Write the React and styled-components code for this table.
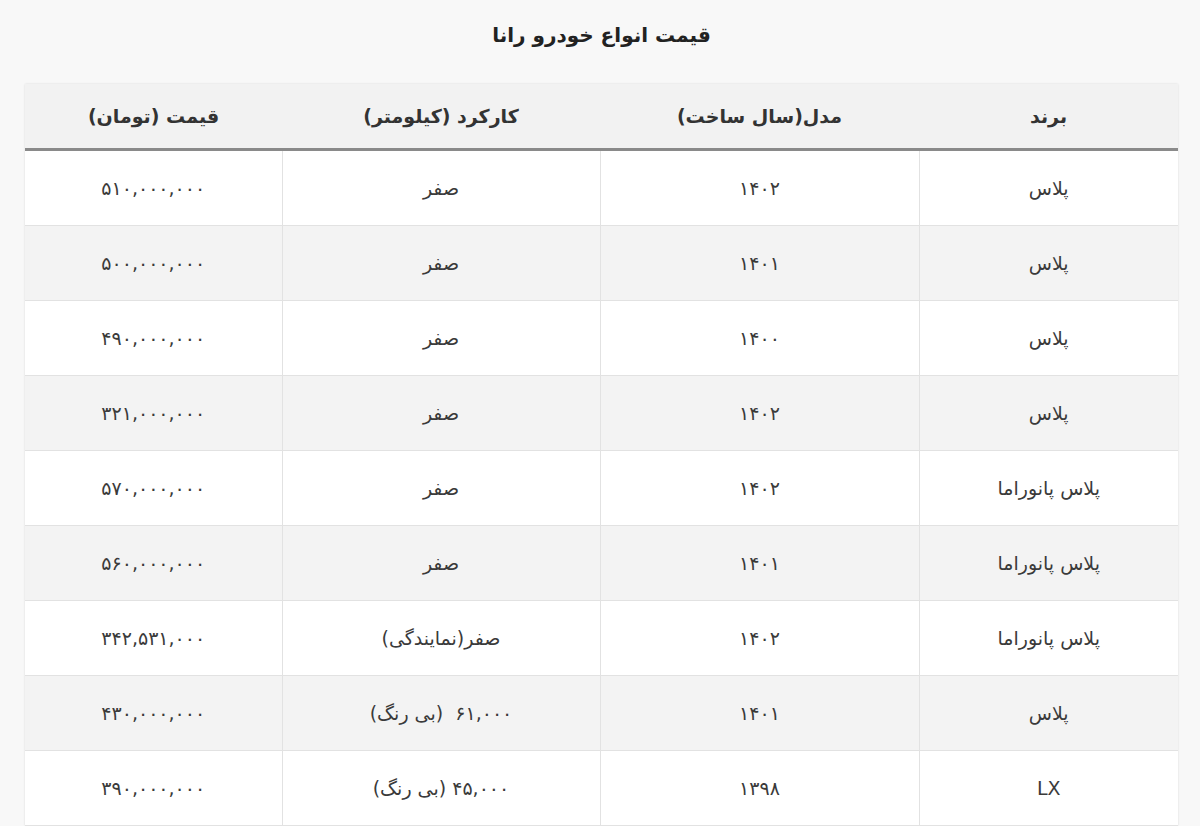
import React from 'react';
import styled, { createGlobalStyle } from 'styled-components';

const GlobalStyle = createGlobalStyle`
  html, body {
    margin: 0;
    padding: 0;
    background: #f8f8f8;
  }
  body {
    font-family: "DejaVu Sans", "Noto Sans", sans-serif;
    color: #333;
  }
`;

const Page = styled.div`
  direction: rtl;
  padding: 18px 22px 0 25px;
  height: 826px;
  box-sizing: border-box;
  overflow: hidden;
`;

const Title = styled.h2`
  margin: 0 0 32px 0;
  text-align: center;
  font-size: 20px;
  font-weight: bold;
  color: #222;
  line-height: 34px;
`;

const Table = styled.table`
  width: 100%;
  border-collapse: collapse;
  table-layout: fixed;
  background: #fff;
  box-shadow: 0 0 2px rgba(0, 0, 0, 0.12);
`;

const HeadCell = styled.th`
  height: 64px;
  background: #f2f2f2;
  border-bottom: 3px solid #8a8a8a;
  font-size: 19px;
  font-weight: bold;
  color: #333;
  text-align: center;
  padding: 0;
  width: ${(p) => p.$w}px;
`;

const Row = styled.tr`
  background: ${(p) => (p.$alt ? '#f3f3f3' : '#fff')};
`;

const Cell = styled.td`
  height: 74px;
  padding: 0;
  text-align: center;
  font-size: 19px;
  color: #3a3a3a;
  border-left: 1px solid #e2e2e2;
  border-bottom: 1px solid #e2e2e2;
  &:last-child {
    border-left: none;
  }
`;

const columns = [
  { title: 'برند', w: 259 },
  { title: 'مدل(سال ساخت)', w: 319 },
  { title: 'کارکرد (کیلومتر)', w: 318 },
  { title: 'قیمت (تومان)', w: 257 },
];

const rows = [
  ['پلاس', '۱۴۰۲', 'صفر', '۵۱۰,۰۰۰,۰۰۰'],
  ['پلاس', '۱۴۰۱', 'صفر', '۵۰۰,۰۰۰,۰۰۰'],
  ['پلاس', '۱۴۰۰', 'صفر', '۴۹۰,۰۰۰,۰۰۰'],
  ['پلاس', '۱۴۰۲', 'صفر', '۳۲۱,۰۰۰,۰۰۰'],
  ['پلاس پانوراما', '۱۴۰۲', 'صفر', '۵۷۰,۰۰۰,۰۰۰'],
  ['پلاس پانوراما', '۱۴۰۱', 'صفر', '۵۶۰,۰۰۰,۰۰۰'],
  ['پلاس پانوراما', '۱۴۰۲', 'صفر(نمایندگی)', '۳۴۲,۵۳۱,۰۰۰'],
  ['پلاس', '۱۴۰۱', '۶۱,۰۰۰\u00a0\u00a0(بی رنگ)', '۴۳۰,۰۰۰,۰۰۰'],
  ['LX', '۱۳۹۸', '۴۵,۰۰۰ (بی رنگ)', '۳۹۰,۰۰۰,۰۰۰'],
];

export default function App() {
  return (
    <>
      <GlobalStyle />
      <Page>
        <Title>قیمت انواع خودرو رانا</Title>
        <Table>
          <thead>
            <tr>
              {columns.map((c) => (
                <HeadCell key={c.title} $w={c.w}>
                  {c.title}
                </HeadCell>
              ))}
            </tr>
          </thead>
          <tbody>
            {rows.map((r, i) => (
              <Row key={i} $alt={i % 2 === 1}>
                {r.map((v, j) => (
                  <Cell key={j}>{v}</Cell>
                ))}
              </Row>
            ))}
          </tbody>
        </Table>
      </Page>
    </>
  );
}
